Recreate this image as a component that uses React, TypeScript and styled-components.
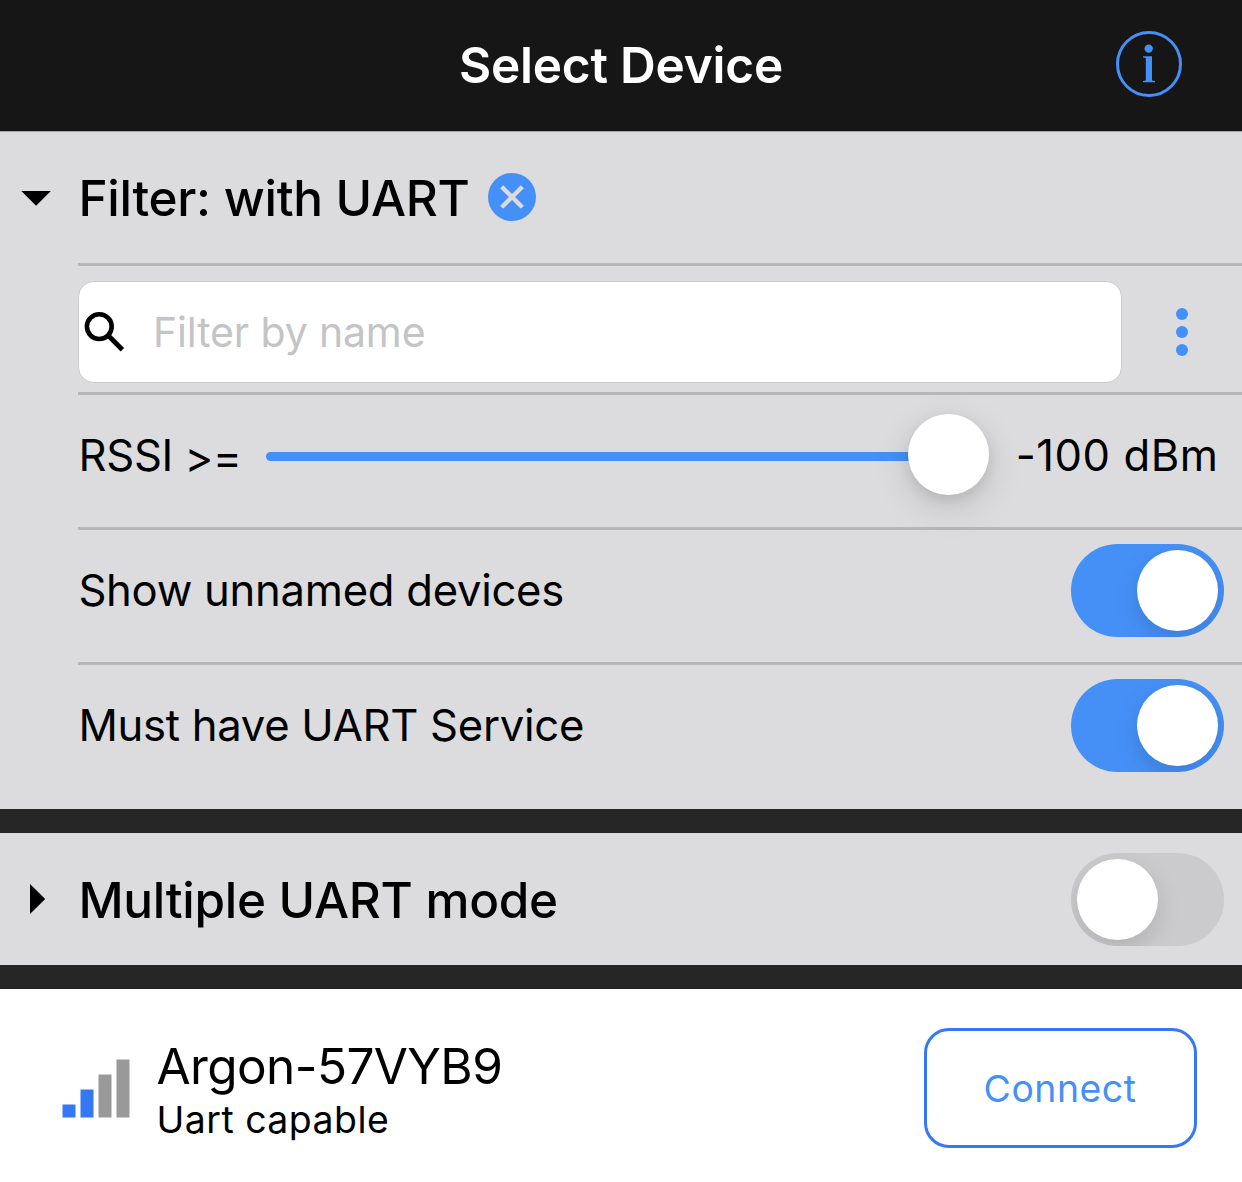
import React, { useState } from "react";
import styled, { createGlobalStyle } from "styled-components";

const BLUE = "#4590f7";
const DEEP_BLUE = "#3478f6";
const PANEL = "#dcdcde";

const GlobalStyle = createGlobalStyle`
  *, *::before, *::after { box-sizing: border-box; }
  body {
    margin: 0;
    background: #fff;
    font-family: Inter, "Liberation Sans", sans-serif;
    font-feature-settings: "calt" 0;
    color: #000;
  }
  button { font-family: inherit; padding: 0; border: 0; background: none; }
`;

const Screen = styled.main`
  width: 1242px;
  height: 1182px;
  display: flex;
  flex-direction: column;
  overflow: hidden;
  background: #fff;
`;

const NavBar = styled.header`
  height: 132px;
  flex: none;
  display: grid;
  grid-template-columns: 1fr auto 1fr;
  align-items: center;
  padding: 0 60px;
  background: #161616;
  border-bottom: 1px solid #a4a4a5;
`;

const NavTitle = styled.h1`
  grid-column: 2;
  margin: 0 0 2px;
  font-size: 49.5px;
  line-height: 60px;
  font-weight: 600;
  letter-spacing: -0.2px;
  color: #fff;
  white-space: nowrap;
`;

const InfoButton = styled.button`
  justify-self: end;
  width: 66px;
  height: 66px;
  margin-bottom: 3px;
  svg { display: block; }
`;

const Panel = styled.section`
  flex: none;
  background: ${PANEL};
`;

const Gap = styled.div`
  flex: none;
  height: 24px;
  background: #262626;
`;

const SectionHeader = styled.div<{ $height: number }>`
  height: ${(p) => p.$height}px;
  display: flex;
  align-items: center;
  padding-right: 18px;
`;

const Disclosure = styled.button`
  width: 78.5px;
  flex: none;
  svg { display: block; }
`;

const SectionTitle = styled.h2<{ $drop?: number }>`
  margin: 0;
  padding-top: ${(p) => p.$drop ?? 0}px;
  font-size: 49.5px;
  line-height: 60px;
  font-weight: 500;
  letter-spacing: -0.3px;
  white-space: nowrap;
`;

const ClearButton = styled.button`
  width: 48px;
  height: 48px;
  margin-left: 18.2px;
  margin-bottom: 1px;
  svg { display: block; }
`;

const Row = styled.div<{ $height: number }>`
  height: ${(p) => p.$height}px;
  margin-left: 78px;
  border-top: 3px solid #b6b7b7;
  padding: 14px 18px 0 0;
  display: flex;
  align-items: flex-start;
`;

const RowLabel = styled.span`
  margin-left: 0.4px;
  font-size: 43.6px;
  line-height: 93px;
  letter-spacing: -0.27px;
  white-space: nowrap;
`;

const SliderValue = styled(RowLabel)`
  margin: 0 5.5px 0 0;
  letter-spacing: 0.55px;
`;

const Spacer = styled.div`
  flex: 1;
`;

const SearchField = styled.label`
  width: 1044px;
  height: 102px;
  margin-top: 1px;
  display: flex;
  align-items: center;
  padding-left: 5px;
  background: #fff;
  border: 1px solid #cbcbcd;
  border-radius: 16px;
  svg { display: block; flex: none; }
`;

const SearchInput = styled.input`
  flex: 1;
  min-width: 0;
  height: 60px;
  margin-left: 27px;
  padding: 0;
  border: 0;
  outline: 0;
  background: transparent;
  font-family: inherit;
  font-size: 41px;
  letter-spacing: -0.15px;
  &::placeholder { color: #c4c4c6; opacity: 1; }
`;

const MoreButton = styled.button`
  display: flex;
  flex-direction: column;
  gap: 6px;
  margin: 28px 0 0 54px;
`;

const Dot = styled.span`
  width: 12px;
  height: 12px;
  border-radius: 50%;
  background: ${BLUE};
`;

const SliderLabel = styled(RowLabel)`
  display: flex;
  gap: 11.5px;
  width: 187.6px;
`;

const Operator = styled.span`
  padding-top: 2px;
`;

const Slider = styled.div`
  width: 723px;
  height: 81px;
  margin-top: 5px;
  display: flex;
  align-items: center;
  flex: none;
`;

const Track = styled.div`
  flex: 1;
  height: 9px;
  margin: 4px -6px 0 0;
  border-radius: 5px 0 0 5px;
  background: ${BLUE};
`;

const Thumb = styled.div`
  position: relative;
  width: 81px;
  height: 81px;
  flex: none;
  border-radius: 50%;
  background: #fff;
  box-shadow: 0 12px 38px rgba(0, 0, 0, 0.12), 0 5px 14px rgba(0, 0, 0, 0.1);
`;

const SwitchTrack = styled.button<{ $on: boolean }>`
  width: 153px;
  height: 93px;
  flex: none;
  display: flex;
  align-items: center;
  justify-content: ${(p) => (p.$on ? "flex-end" : "flex-start")};
  padding: 6px;
  border-radius: 47px;
  overflow: hidden;
  background: ${(p) => (p.$on ? BLUE : "#cbcbcd")};
`;

const Knob = styled.span`
  width: 81px;
  height: 81px;
  border-radius: 50%;
  background: #fff;
  box-shadow: 0 9px 24px rgba(0, 0, 0, 0.13);
`;

const DeviceRow = styled.article`
  flex: 1;
  display: flex;
  align-items: flex-start;
  padding: 39px 45px 0 62px;
`;

const SignalIcon = styled.svg`
  display: block;
  flex: none;
  margin-top: 31px;
`;

const DeviceText = styled.div`
  flex: 1;
  margin: 8px 0 0 25.5px;
`;

const DeviceName = styled.div`
  font-size: 49.5px;
  line-height: 60px;
  letter-spacing: -0.6px;
  white-space: nowrap;
`;

const DeviceDetail = styled.div`
  margin-top: 1px;
  font-size: 37.4px;
  line-height: 46px;
  letter-spacing: 0.48px;
`;

const ConnectButton = styled.button`
  && {
    width: 273px;
    height: 120px;
    padding-right: 1px;
    border: 3px solid ${DEEP_BLUE};
    border-radius: 25px;
    font-size: 37.4px;
    letter-spacing: 0.5px;
    color: ${BLUE};
  }
`;

function Switch({ on, onChange, label }: { on: boolean; onChange: (v: boolean) => void; label: string }) {
  return (
    <SwitchTrack $on={on} role="switch" aria-checked={on} aria-label={label} onClick={() => onChange(!on)}>
      <Knob />
    </SwitchTrack>
  );
}

export default function App() {
  const [unnamed, setUnnamed] = useState(true);
  const [uartOnly, setUartOnly] = useState(true);
  const [multiple, setMultiple] = useState(false);

  return (
    <>
      <GlobalStyle />
      <Screen>
        <NavBar>
          <NavTitle>Select Device</NavTitle>
          <InfoButton aria-label="Information">
            <svg width="66" height="66" viewBox="0 0 66 66" fill={BLUE}>
              <circle cx="33" cy="33" r="31.5" fill="none" stroke={BLUE} strokeWidth="3" />
              <circle cx="32.7" cy="17.6" r="4.2" />
              <path d="M27 25.2H36V49.4L39 49.9V51.2H27V49.9L29.8 49.4V27L27 26.5Z" />
            </svg>
          </InfoButton>
        </NavBar>

        <Panel>
          <SectionHeader $height={131}>
            <Disclosure aria-label="Collapse filter">
              <svg width="78" height="30" viewBox="0 0 78 30">
                <path d="M21.3 8H50.9L36.1 22.8Z" />
              </svg>
            </Disclosure>
            <SectionTitle>Filter: with UART</SectionTitle>
            <ClearButton aria-label="Clear filter">
              <svg width="48" height="48" viewBox="0 0 48 48">
                <circle cx="24" cy="24" r="24" fill={BLUE} />
                <path d="M13.7 13.7L34.3 34.3M34.3 13.7L13.7 34.3" stroke={PANEL} strokeWidth="4.3" />
              </svg>
            </ClearButton>
          </SectionHeader>

          <Row $height={129}>
            <SearchField>
              <svg width="42" height="42" viewBox="0 0 42 42" fill="none" stroke="#000">
                <circle cx="15.3" cy="15.6" r="12.4" strokeWidth="4.6" />
                <path d="M25.2 25.5L38.4 38.7" strokeWidth="4.8" />
              </svg>
              <SearchInput placeholder="Filter by name" />
            </SearchField>
            <MoreButton aria-label="More options">
              <Dot />
              <Dot />
              <Dot />
            </MoreButton>
          </Row>

          <Row $height={135}>
            <SliderLabel>
              RSSI <Operator>&gt;=</Operator>
            </SliderLabel>
            <Slider>
              <Track />
              <Thumb />
            </Slider>
            <Spacer />
            <SliderValue>-100 dBm</SliderValue>
          </Row>

          <Row $height={135}>
            <RowLabel>Show unnamed devices</RowLabel>
            <Spacer />
            <Switch on={unnamed} onChange={setUnnamed} label="Show unnamed devices" />
          </Row>

          <Row $height={147}>
            <RowLabel>Must have UART Service</RowLabel>
            <Spacer />
            <Switch on={uartOnly} onChange={setUartOnly} label="Must have UART Service" />
          </Row>
        </Panel>

        <Gap />

        <Panel>
          <SectionHeader $height={132}>
            <Disclosure aria-label="Expand multiple UART mode">
              <svg width="78" height="30" viewBox="0 0 78 30">
                <path d="M30 0L45.2 15L30 30Z" />
              </svg>
            </Disclosure>
            <SectionTitle $drop={2}>Multiple UART mode</SectionTitle>
            <Spacer />
            <Switch on={multiple} onChange={setMultiple} label="Multiple UART mode" />
          </SectionHeader>
        </Panel>

        <Gap />

        <DeviceRow>
          <SignalIcon width="69" height="60" viewBox="0 0 69 60">
            <rect x="0.5" y="45.5" width="13" height="13" fill={DEEP_BLUE} />
            <rect x="18.5" y="30.5" width="13" height="28" fill={DEEP_BLUE} />
            <rect x="36.5" y="15.5" width="13" height="43" fill="#999" />
            <rect x="54.5" y="0.5" width="13" height="58" fill="#999" />
          </SignalIcon>
          <DeviceText>
            <DeviceName>Argon-57VYB9</DeviceName>
            <DeviceDetail>Uart capable</DeviceDetail>
          </DeviceText>
          <ConnectButton>Connect</ConnectButton>
        </DeviceRow>
      </Screen>
    </>
  );
}
